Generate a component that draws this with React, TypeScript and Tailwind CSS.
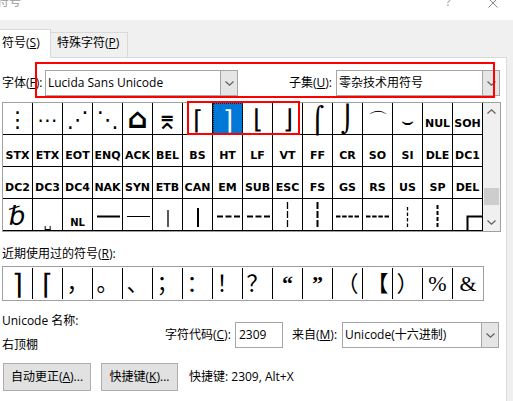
import type { ReactNode } from "react";

type Cell = { t: string; c?: string } | { svg: ReactNode };

const CTL = "font-[DejaVu_Sans,sans-serif] text-[11px] font-bold pt-[10px]";
const SYM = "font-[DejaVu_Sans,sans-serif]";

function Box({ children }: { children: ReactNode }) {
  return (
    <svg width="29" height="31" viewBox="0 0 29 31" fill="none" stroke="#000">
      {children}
    </svg>
  );
}

const ctl = (names: string[]): Cell[] => names.map((n) => ({ t: n, c: CTL }));

const ROWS: Cell[][] = [
  [
    { t: "⋮", c: `${SYM} text-[22px] pt-[3px]` },
    { t: "⋯", c: `${SYM} text-[20px] pt-[3px]` },
    { t: "⋰", c: `${SYM} text-[22px] pt-[3px]` },
    { t: "⋱", c: `${SYM} text-[22px] pt-[3px]` },
    { t: "⌂", c: `${SYM} text-[28px] font-bold pt-[1px]` },
    { t: "⌆", c: `${SYM} text-[26px] pt-[3px]` },
    { t: "⌈", c: `${SYM} text-[26px] font-extralight pt-[3px]` },
    { t: "⌉", c: `${SYM} text-[26px] font-extralight pt-[3px]` },
    { t: "⌊", c: `${SYM} text-[26px] font-extralight pt-[1px]` },
    { t: "⌋", c: `${SYM} text-[26px] font-extralight pt-[1px]` },
    { t: "⌠", c: `${SYM} text-[26px] pt-[3px]` },
    { t: "⌡", c: `${SYM} text-[26px] pt-[1px]` },
    { t: "⌒", c: `${SYM} text-[20px] pt-[2px]` },
    { t: "⌣", c: `${SYM} text-[20px] pt-[4px]` },
    ...ctl(["NUL", "SOH"]),
  ],
  ctl(["STX", "ETX", "EOT", "ENQ", "ACK", "BEL", "BS", "HT", "LF", "VT", "FF", "CR", "SO", "SI", "DLE", "DC1"]),
  ctl(["DC2", "DC3", "DC4", "NAK", "SYN", "ETB", "CAN", "EM", "SUB", "ESC", "FS", "GS", "RS", "US", "SP", "DEL"]),
  [
    { t: "␢", c: `${SYM} text-[26px] italic pt-[2px]` },
    { t: "␣", c: `${SYM} text-[12px] pt-[16px]` },
    { t: "NL", c: "font-[DejaVu_Sans,sans-serif] text-[10px] font-bold pt-[16px]" },
    { svg: <Box><line x1="4" x2="27" y1="17.5" y2="17.5" strokeWidth="2" /></Box> },
    { svg: <Box><line x1="4" x2="27" y1="17.5" y2="17.5" strokeWidth="1" /></Box> },
    { svg: <Box><line x1="15" x2="15" y1="11" y2="28" strokeWidth="1.3" /></Box> },
    { svg: <Box><line x1="15" x2="15" y1="9" y2="28" strokeWidth="2" /></Box> },
    { svg: <Box><line x1="4" x2="27" y1="17.5" y2="17.5" strokeWidth="2" strokeDasharray="6 2.5" /></Box> },
    { svg: <Box><line x1="4" x2="27" y1="17.5" y2="17.5" strokeWidth="2" strokeDasharray="6 2.5" /></Box> },
    { svg: <Box><line x1="14.5" x2="14.5" y1="3" y2="28" strokeWidth="1.3" strokeDasharray="7 2" /></Box> },
    { svg: <Box><line x1="14.5" x2="14.5" y1="3" y2="28" strokeWidth="2" strokeDasharray="7 2" /></Box> },
    { svg: <Box><line x1="3" x2="26" y1="17.5" y2="17.5" strokeWidth="2" strokeDasharray="4.5 1.67" /></Box> },
    { svg: <Box><line x1="3" x2="26" y1="17.5" y2="17.5" strokeWidth="2" strokeDasharray="4.5 1.67" /></Box> },
    { svg: <Box><line x1="14.5" x2="14.5" y1="8" y2="28" strokeWidth="1.3" strokeDasharray="3.5 2" /></Box> },
    { svg: <Box><line x1="14.5" x2="14.5" y1="6" y2="28" strokeWidth="2" strokeDasharray="4 2" /></Box> },
    { svg: <Box><path d="M14.5 31V17.5H29" strokeWidth="2" /></Box> },
  ],
];

const RECENT: { t: string; c?: string }[] = [
  { t: "⌉", c: "font-[DejaVu_Sans,sans-serif] text-[28px] font-extralight pt-[3px]" },
  { t: "⌈", c: "font-[DejaVu_Sans,sans-serif] text-[28px] font-extralight pt-[3px]" },
  { t: "，" },
  { t: "。" },
  { t: "、" },
  { t: "；" },
  { t: "：" },
  { t: "！" },
  { t: "？" },
  { t: "“", c: "font-bold" },
  { t: "”", c: "font-bold" },
  { t: "（" },
  { t: "【" },
  { t: "）" },
  { t: "%" },
  { t: "&" },
];

function Chevron({ up }: { up?: boolean }) {
  return (
    <svg width="9" height="5" viewBox="0 0 9 5" fill="none" stroke="#606060" strokeWidth="1.2">
      <path d={up ? "M0.5 4.5L4.5 0.8L8.5 4.5" : "M0.5 0.5L4.5 4.2L8.5 0.5"} />
    </svg>
  );
}

function Combo({ className, text }: { className: string; text: string }) {
  return (
    <div className={`${className} h-[26px] border border-[#a6a6a6] flex items-center`}>
      <span className="flex-1 pl-[2px] whitespace-nowrap overflow-hidden">{text}</span>
      <div className="w-[17px] h-full bg-[#e5e5e5] border-l border-[#a6a6a6] flex items-center justify-center">
        <Chevron />
      </div>
    </div>
  );
}

function GridCell({ cell, selected }: { cell: Cell; selected: boolean }) {
  return (
    <div
      className={`w-[30px] h-[32px] border-r border-b border-black flex items-center justify-center leading-none ${
        selected ? "bg-[#0078d7] text-white outline outline-1 outline-dotted outline-[#222] -outline-offset-1" : ""
      }`}
    >
      {"svg" in cell ? cell.svg : <span className={cell.c}>{cell.t}</span>}
    </div>
  );
}

export default function App() {
  return (
    <div className="w-[513px] h-[401px] overflow-hidden bg-[#f0f0f0] flex flex-col text-[12px] leading-[16px] text-black font-[Open_Sans,Noto_Sans_CJK_SC,sans-serif]">
      {/* title bar, cut at the top */}
      <div className="h-[20px] shrink-0 bg-white flex items-start">
        <span className="-ml-[3px] -mt-[6px] text-[#999]">符号</span>
        <span className="ml-auto -mt-[6px] text-[#999]">?</span>
        <svg className="ml-[37px] mr-[15px] -mt-[2px]" width="10" height="10" viewBox="0 0 10 10" stroke="#888" strokeWidth="1">
          <path d="M0.5 0.5L9.5 9.5M9.5 0.5L0.5 9.5" />
        </svg>
      </div>

      {/* tabs */}
      <div className="h-[38px] shrink-0 flex items-end">
        <div className="h-[29px] w-[51px] bg-white border-t border-r border-[#d9d9d9] pl-[2px] pt-[5px]">
          符号(<u>S</u>)
        </div>
        <div className="h-[26px] w-[77px] border-t border-r border-b border-[#d9d9d9] pl-[6px] pt-[2px]">
          特殊字符(<u>P</u>)
        </div>
        <div className="flex-1 self-stretch border-b border-[#d9d9d9] mr-[6px]" />
      </div>

      {/* tab panel */}
      <div className="flex-1 w-[507px] bg-white border-r border-[#dcdcdc] relative flex flex-col">
        <div className="mt-[12px] h-[26px] flex items-center">
          <span className="ml-[2px] w-[43px] whitespace-nowrap">字体(<u>F</u>):</span>
          <Combo className="w-[193px]" text="Lucida Sans Unicode" />
          <span className="ml-[51px] w-[47px] whitespace-nowrap">子集(<u>U</u>):</span>
          <Combo className="w-[164px]" text="零杂技术用符号" />
        </div>

        {/* symbol grid */}
        <div className="mt-[6px] ml-[2px] w-[499px] h-[130px] shrink-0 border border-[#a0a0a0] flex">
          <div className="grid grid-cols-[repeat(16,30px)] grid-rows-[repeat(4,32px)]">
            {ROWS.map((row, r) =>
              row.map((cell, i) => <GridCell key={`${r}-${i}`} cell={cell} selected={r === 0 && i === 7} />)
            )}
          </div>
          <div className="w-[17px] h-full bg-[#f0f0f0] flex flex-col">
            <div className="h-[17px] flex items-center justify-center">
              <Chevron up />
            </div>
            <div className="flex-1">
              <div className="mt-[68px] mx-[1px] h-[17px] bg-[#cdcdcd]" />
            </div>
            <div className="h-[17px] flex items-center justify-center">
              <Chevron />
            </div>
          </div>
        </div>

        <div className="mt-[14px] ml-[2px]">
          近期使用过的符号(<u>R</u>):
        </div>
        <div className="mt-[4px] ml-[2px] w-[482px] h-[35px] shrink-0 border border-[#a0a0a0] flex py-[1px]">
          {RECENT.map((s, i) => (
            <div
              key={i}
              className={`w-[30px] h-full flex items-center justify-center leading-none text-[22px] font-[Liberation_Serif,Noto_Sans_CJK_SC,DejaVu_Sans,serif] ${
                i < RECENT.length - 1 ? "border-r border-black" : ""
              }`}
            >
              <span className={s.c}>{s.t}</span>
            </div>
          ))}
        </div>

        {/* name / code row */}
        <div className="mt-[11px] flex">
          <div className="w-[165px] pl-[2px]">
            <div className="leading-[18px]">Unicode 名称:</div>
            <div className="mt-[6px] leading-[18px]">右顶棚</div>
          </div>
          <div className="mt-[10px] h-[26px] flex items-center">
            <span className="w-[70px] whitespace-nowrap">字符代码(<u>C</u>):</span>
            <div className="w-[48px] h-[26px] border border-[#a6a6a6] pl-[3px] flex items-center">2309</div>
            <span className="ml-[9px] w-[50px] whitespace-nowrap">来自(<u>M</u>):</span>
            <Combo className="w-[157px]" text="Unicode(十六进制)" />
          </div>
        </div>

        {/* buttons */}
        <div className="mt-[9px] h-[28px] flex items-center">
          <button className="ml-[3px] w-[88px] h-[28px] bg-[#e1e1e1] border border-[#adadad]">
            自动更正(<u>A</u>)...
          </button>
          <button className="ml-[10px] w-[77px] h-[28px] bg-[#e1e1e1] border border-[#adadad]">
            快捷键(<u>K</u>)...
          </button>
          <span className="ml-[11px]">快捷键: 2309, Alt+X</span>
        </div>

        {/* red highlight frames */}
        <div className="absolute top-[4px] left-[35px] w-[460px] h-[36px] border-2 border-[#ff0000]" />
        <div className="absolute top-[43px] left-[187px] w-[113px] h-[34px] border-2 border-[#ff0000]" />
      </div>
    </div>
  );
}
